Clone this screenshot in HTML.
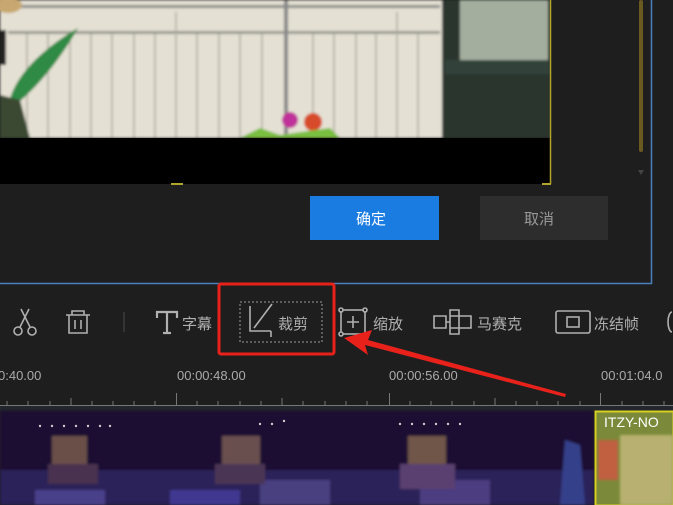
<!DOCTYPE html>
<html><head><meta charset="utf-8"><style>
body{margin:0;width:673px;height:505px;overflow:hidden;background:#1e1e1e;font-family:"Liberation Sans","Noto Sans CJK SC",sans-serif;}
.t{position:absolute;color:#b0b0b0;font-size:15px;}
</style></head><body>
<svg width="673" height="505" style="position:absolute;left:0;top:0">
<defs><filter id="b"><feGaussianBlur stdDeviation="1.2"/></filter></defs>
<rect width="673" height="505" fill="#1e1e1e"/>
<g filter="url(#b)">
<rect x="0" y="0" width="442" height="138" fill="#e4e0d3"/>
<rect x="20" y="5" width="420" height="3" fill="#8a8c88"/>
<rect x="8" y="31" width="432" height="3" fill="#9a9a92"/>
<g stroke="#aeac9f" stroke-width="1.5">
<line x1="27" y1="34" x2="27" y2="138"/><line x1="48" y1="34" x2="48" y2="138"/><line x1="70" y1="34" x2="70" y2="138"/><line x1="91" y1="34" x2="91" y2="138"/><line x1="112" y1="34" x2="112" y2="138"/><line x1="134" y1="34" x2="134" y2="138"/><line x1="155" y1="34" x2="155" y2="138"/><line x1="176" y1="12" x2="176" y2="138"/><line x1="197" y1="34" x2="197" y2="138"/><line x1="219" y1="34" x2="219" y2="138"/><line x1="240" y1="34" x2="240" y2="138"/><line x1="262" y1="34" x2="262" y2="138"/><line x1="286" y1="0" x2="286" y2="138" stroke="#888" stroke-width="4"/><line x1="313" y1="34" x2="313" y2="138"/><line x1="334" y1="34" x2="334" y2="138"/><line x1="356" y1="34" x2="356" y2="138"/><line x1="376" y1="34" x2="376" y2="138"/><line x1="397" y1="12" x2="397" y2="138"/><line x1="418" y1="34" x2="418" y2="138"/>
</g>
<path d="M8,110 C10,80 40,50 78,28 C60,60 35,90 15,105 Z" fill="#2f8a45"/>
<rect x="0" y="30" width="6" height="35" fill="#222"/>
<ellipse cx="8" cy="5" rx="14" ry="8" fill="#c8a870"/>
<path d="M0,95 L20,100 L30,138 L0,138Z" fill="#3a4a30"/>
<circle cx="290" cy="120" r="8" fill="#c0309a"/><circle cx="313" cy="122" r="9" fill="#d84b2a"/><path d="M240,138 L260,128 L280,135 L330,128 L340,138Z" fill="#7ac040"/>
<rect x="442" y="0" width="108" height="138" fill="#2a352e"/>
<rect x="460" y="0" width="88" height="62" fill="#a4ae9f"/>
<rect x="445" y="60" width="105" height="14" fill="#33423a"/>
</g>
<rect x="0" y="138" width="550" height="46" fill="#000"/>
<line x1="550.5" y1="0" x2="550.5" y2="184" stroke="#b3a42a" stroke-width="1.5"/>
<rect x="171" y="183" width="12" height="2" fill="#b3a42a"/>
<rect x="542" y="183" width="9" height="2" fill="#b3a42a"/>
<rect x="639" y="0" width="4" height="152" rx="2" fill="#6b5a20"/>
<path d="M638,170 L644,170 L641,175Z" fill="#444"/>
<line x1="651.5" y1="0" x2="651.5" y2="284" stroke="#4a80c0" stroke-width="1.5"/>
<line x1="0" y1="283.5" x2="652" y2="283.5" stroke="#4a80c0" stroke-width="1.5"/>
<rect x="310" y="196" width="129" height="44" fill="#1a7be0"/>
<rect x="480" y="196" width="128" height="44" fill="#2d2d2d"/>
<g stroke="#b0b0b0" stroke-width="1.6" fill="none">
<circle cx="18" cy="331" r="4"/><circle cx="32" cy="331" r="4"/><path d="M20,327 L29,309 M30,327 L21,309"/>
<path d="M66,315 H90 M72,315 V311 H84 V315 M69,315 V333 H87 V315 M75,320 V329 M81,320 V329"/>
<line x1="124" y1="312" x2="124" y2="332" stroke="#3a3a3a"/>
<path d="M157,318 V312 H177 V318 M167,312 V333 M163,333 H171" stroke-width="2.2"/>
<rect x="240" y="302" width="82" height="40" stroke="#999" stroke-width="1" stroke-dasharray="2,2"/>
<path d="M250,306 V331 H271 M254,328 L272,304 M271,331 V337"/>
<rect x="341" y="310" width="24" height="24"/><path d="M353,316 V328 M347,322 H359"/>
<circle cx="341" cy="310" r="2" fill="#1e1e1e"/><circle cx="365" cy="310" r="2" fill="#1e1e1e"/><circle cx="341" cy="334" r="2" fill="#1e1e1e"/>
<path d="M434,316 H446 V328 H434 Z M450,310 H459 V334 H450 Z M459,316 H471 V328 H459 M446,322 H450 M450,316 H459 M450,328 H459"/>
<rect x="556" y="311" width="34" height="22" rx="2"/><rect x="567" y="317" width="12" height="10"/>
<path d="M672,312 A4,10 0 0 0 672,332"/>
</g>
<rect x="219" y="284" width="115" height="70" fill="none" stroke="#e8221b" stroke-width="3" rx="2"/>
<line x1="0" y1="405.5" x2="673" y2="405.5" stroke="#777" stroke-width="1"/>
<g stroke="#777" stroke-width="1">
<line x1="176.5" y1="393" x2="176.5" y2="405"/><line x1="389.5" y1="393" x2="389.5" y2="405"/><line x1="600.5" y1="393" x2="600.5" y2="405"/>
<line x1="7" y1="401" x2="7" y2="405"/><line x1="28" y1="401" x2="28" y2="405"/><line x1="50" y1="401" x2="50" y2="405"/><line x1="71" y1="398" x2="71" y2="405"/><line x1="92" y1="401" x2="92" y2="405"/><line x1="113" y1="401" x2="113" y2="405"/><line x1="134" y1="401" x2="134" y2="405"/><line x1="155" y1="401" x2="155" y2="405"/>
<line x1="197" y1="401" x2="197" y2="405"/><line x1="218" y1="401" x2="218" y2="405"/><line x1="240" y1="401" x2="240" y2="405"/><line x1="261" y1="401" x2="261" y2="405"/><line x1="282" y1="398" x2="282" y2="405"/><line x1="303" y1="401" x2="303" y2="405"/><line x1="325" y1="401" x2="325" y2="405"/><line x1="346" y1="401" x2="346" y2="405"/><line x1="367" y1="401" x2="367" y2="405"/>
<line x1="410" y1="401" x2="410" y2="405"/><line x1="431" y1="401" x2="431" y2="405"/><line x1="452" y1="401" x2="452" y2="405"/><line x1="474" y1="401" x2="474" y2="405"/><line x1="495" y1="398" x2="495" y2="405"/><line x1="516" y1="401" x2="516" y2="405"/><line x1="537" y1="401" x2="537" y2="405"/><line x1="558" y1="401" x2="558" y2="405"/><line x1="580" y1="401" x2="580" y2="405"/>
<line x1="622" y1="401" x2="622" y2="405"/><line x1="643" y1="401" x2="643" y2="405"/><line x1="664" y1="401" x2="664" y2="405"/>
</g>
<rect x="0" y="406" width="673" height="5" fill="#23272d"/>
<g filter="url(#b)">
<rect x="0" y="411" width="594" height="94" fill="#1b1030"/>
<rect x="0" y="470" width="594" height="35" fill="#2c2258"/>
<rect x="35" y="490" width="70" height="15" fill="#4a3f8a"/>
<rect x="170" y="490" width="70" height="15" fill="#3f3890"/>
<rect x="260" y="480" width="70" height="25" fill="#4a4080"/>
<rect x="420" y="480" width="70" height="25" fill="#4b3d80"/>
<rect x="52" y="436" width="35" height="28" fill="#6a5048"/>
<rect x="48" y="464" width="50" height="20" fill="#4a3050"/>
<rect x="222" y="436" width="38" height="28" fill="#6a5050"/>
<rect x="215" y="464" width="50" height="20" fill="#4b3555"/>
<rect x="408" y="436" width="38" height="28" fill="#70544a"/>
<rect x="400" y="464" width="55" height="25" fill="#5a4070"/>
<path d="M565,440 L580,445 L585,505 L560,505Z" fill="#34408a"/>
</g>
<g fill="#ccc"><circle cx="40" cy="426" r="1.2"/><circle cx="52" cy="426" r="1.2"/><circle cx="64" cy="426" r="1.2"/><circle cx="76" cy="426" r="1.2"/><circle cx="88" cy="426" r="1.2"/><circle cx="100" cy="426" r="1.2"/><circle cx="110" cy="426" r="1.2"/><circle cx="400" cy="424" r="1.2"/><circle cx="412" cy="424" r="1.2"/><circle cx="424" cy="424" r="1.2"/><circle cx="436" cy="424" r="1.2"/><circle cx="448" cy="424" r="1.2"/><circle cx="460" cy="424" r="1.2"/><circle cx="260" cy="424" r="1.2"/><circle cx="272" cy="424" r="1.2"/><circle cx="284" cy="421" r="1.2"/></g>
<rect x="595.5" y="411.5" width="78" height="94" fill="#7a8a3a" stroke="#d8d020" stroke-width="2"/>
<g filter="url(#b)"><rect x="620" y="435" width="53" height="70" fill="#b8b070"/><rect x="598" y="440" width="20" height="40" fill="#c06040"/></g>
<path d="M565,397 L365,345 L368,355 L344,338 L372,330 L368,340 L566,394Z" fill="#e8221b"/>
</svg>
<div class="t" style="left:356px;top:208px;color:#fff;">确定</div>
<div class="t" style="left:524px;top:208px;color:#999;">取消</div>
<div class="t" style="left:182px;top:313px;">字幕</div>
<div class="t" style="left:278px;top:313px;">裁剪</div>
<div class="t" style="left:373px;top:313px;">缩放</div>
<div class="t" style="left:477px;top:313px;">马赛克</div>
<div class="t" style="left:594px;top:313px;">冻结帧</div>
<div class="t" style="left:-2px;top:368px;font-size:13px;color:#aaa;">0:40.00</div>
<div class="t" style="left:177px;top:368px;font-size:13px;color:#aaa;">00:00:48.00</div>
<div class="t" style="left:389px;top:368px;font-size:13px;color:#aaa;">00:00:56.00</div>
<div class="t" style="left:601px;top:368px;font-size:13px;color:#aaa;">00:01:04.0</div>
<div class="t" style="left:604px;top:414px;font-size:14px;color:#fff;">ITZY-NO</div>
</body></html>
